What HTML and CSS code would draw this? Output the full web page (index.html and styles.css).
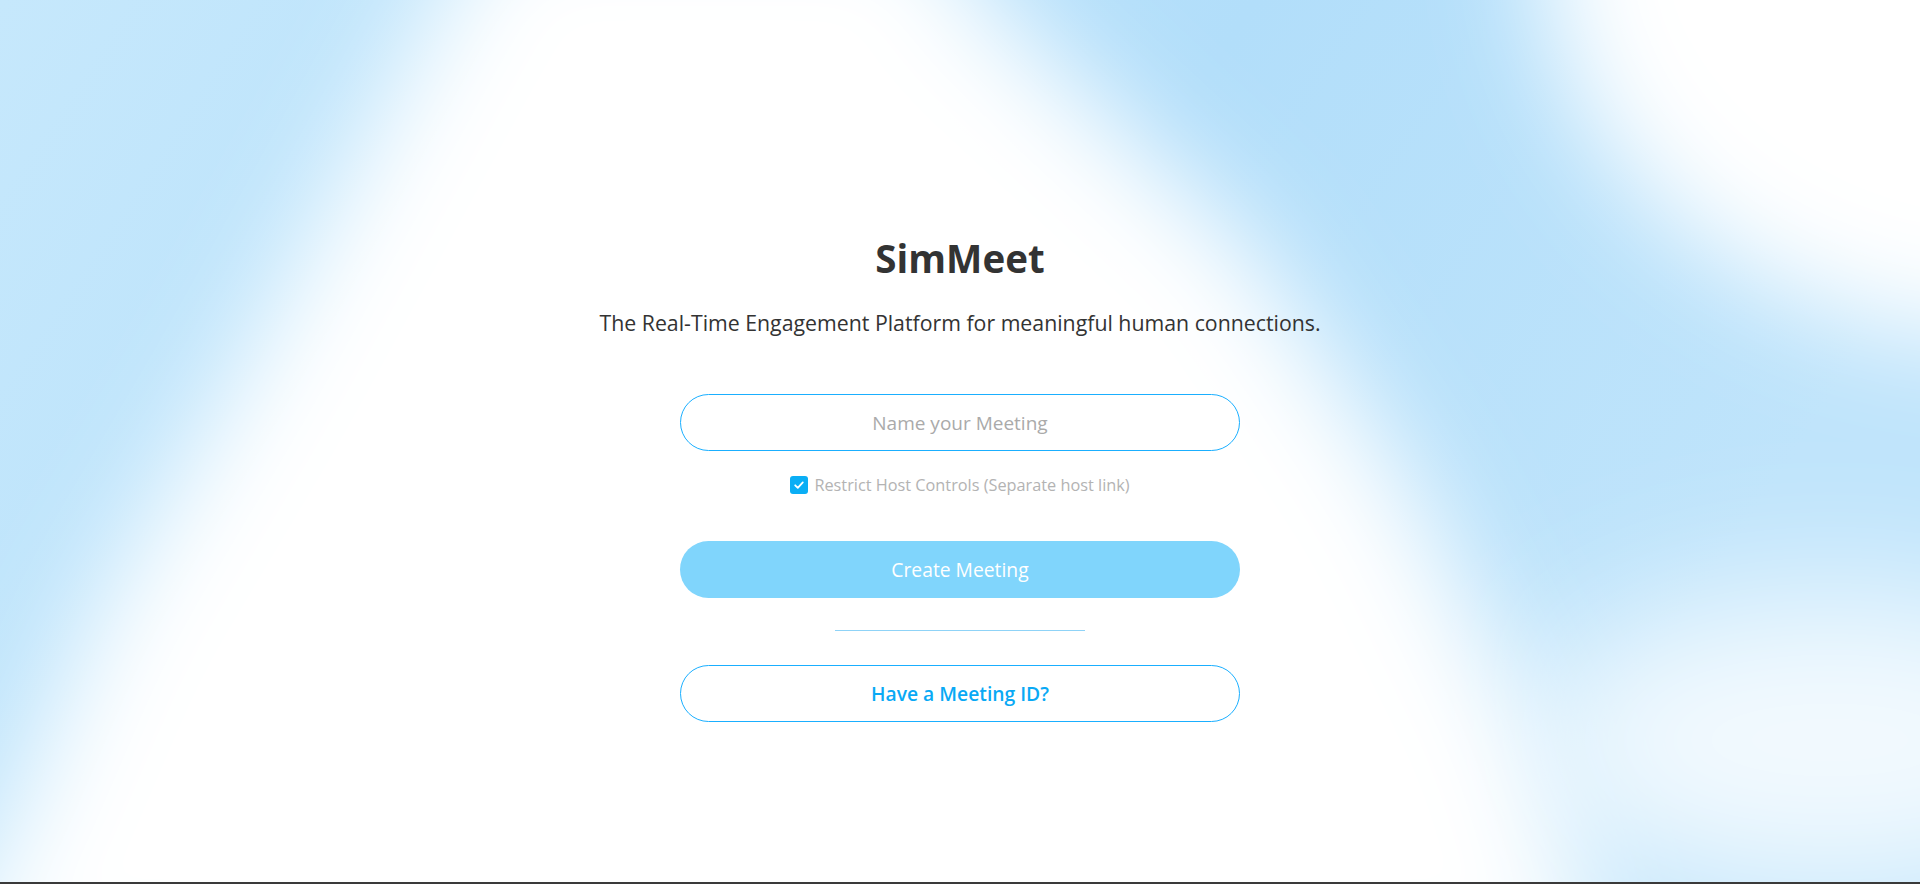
FILE: index.html
```html
<!DOCTYPE html>
<html lang="en">
<head>
<meta charset="utf-8">
<title>SimMeet</title>
<link rel="stylesheet" href="styles.css">
</head>
<body>
<main class="page">
  <section class="hero">
    <h1 class="title">SimMeet</h1>
    <p class="subtitle">The Real-Time Engagement Platform for meaningful human connections.</p>
    <form class="form">
      <input class="name-input" type="text" placeholder="Name your Meeting">
      <label class="check-row">
        <span class="check-box">
          <svg width="12" height="12" viewBox="0 0 12 12"><path d="M2.2 6.3 L4.8 8.8 L9.8 3.4" fill="none" stroke="#fff" stroke-width="1.8" stroke-linecap="round" stroke-linejoin="round"/></svg>
        </span>
        <span class="check-label">Restrict Host Controls (Separate host link)</span>
      </label>
      <button type="button" class="btn-create">Create Meeting</button>
      <hr class="divider">
      <button type="button" class="btn-join">Have a Meeting ID?</button>
    </form>
  </section>
</main>
<footer class="bottom-bar"></footer>
</body>
</html>
```
FILE: styles.css
```css
html, body {
  margin: 0;
  padding: 0;
}
body {
  min-height: 884px;
  display: flex;
  flex-direction: column;
  font-family: "Open Sans", "Noto Sans", sans-serif;
  color: #333;
  background-color: #fff;
  background-image: url("data:image/svg+xml,%3Csvg xmlns='http://www.w3.org/2000/svg' width='1920' height='884' viewBox='0 0 1920 884'%3E%3Cdefs%3E%3ClinearGradient id='g' x1='0' y1='0' x2='1' y2='0.3'%3E%3Cstop offset='0' stop-color='%23c6e8fc'/%3E%3Cstop offset='0.6' stop-color='%23b2defa'/%3E%3Cstop offset='1' stop-color='%23bfe4fb'/%3E%3C/linearGradient%3E%3Cfilter id='b' x='-50%25' y='-50%25' width='200%25' height='200%25'%3E%3CfeGaussianBlur stdDeviation='55'/%3E%3C/filter%3E%3Cfilter id='c' x='-50%25' y='-50%25' width='200%25' height='200%25'%3E%3CfeGaussianBlur stdDeviation='70'/%3E%3C/filter%3E%3C/defs%3E%3Crect width='1920' height='884' fill='url(%23g)'/%3E%3Cg filter='url(%23b)'%3E%3Cpath d='M 500,-100 L 920,-100 L 985,0 L 1250,245 L 1415,490 L 1535,735 L 1610,1000 L -90,1000 L -10,857 L 95,612 L 240,367 L 440,0 Z' fill='%23fff'/%3E%3Cellipse cx='2010' cy='-60' rx='470' ry='400' fill='%23fff'/%3E%3C/g%3E%3Cellipse cx='1830' cy='740' rx='300' ry='150' fill='%23fff' fill-opacity='0.8' filter='url(%23c)'/%3E%3C/svg%3E");
  background-repeat: no-repeat;
  background-size: 1920px 884px;
}
.page {
  flex: 1;
  display: flex;
  justify-content: center;
}
.hero {
  padding-top: 234px;
  display: flex;
  flex-direction: column;
  align-items: center;
}
.title {
  margin: 0;
  font-size: 38.5px;
  line-height: 48px;
  font-weight: 700;
  color: #333;
}
.subtitle {
  margin: 27px 0 0;
  font-size: 21.3px;
  line-height: 28px;
  color: #333;
}
.form {
  margin-top: 57px;
  width: 560px;
  display: flex;
  flex-direction: column;
  align-items: center;
}
.name-input {
  box-sizing: border-box;
  width: 560px;
  height: 57px;
  border: 1px solid #1aafff;
  border-radius: 29px;
  background: #fff;
  text-align: center;
  font-family: inherit;
  font-size: 19px;
  color: #333;
  outline: none;
}
.name-input::placeholder {
  color: #aaa;
}
.check-row {
  margin-top: 22px;
  height: 24px;
  display: flex;
  align-items: center;
  gap: 6px;
}
.check-box {
  width: 18px;
  height: 18px;
  border-radius: 3px;
  background: #0aaef5;
  display: flex;
  align-items: center;
  justify-content: center;
}
.check-label {
  font-size: 16.3px;
  color: #b3b3b3;
}
.btn-create {
  margin-top: 44px;
  width: 560px;
  height: 57px;
  border: none;
  border-radius: 29px;
  background: #80d5fc;
  color: #fff;
  font-family: inherit;
  font-size: 19.3px;
}
.divider {
  margin: 32px 0 0;
  width: 250px;
  height: 1px;
  border: none;
  background: #8fd3f7;
}
.btn-join {
  margin-top: 34px;
  box-sizing: border-box;
  width: 560px;
  height: 57px;
  border: 1px solid #1aafff;
  border-radius: 29px;
  background: #fff;
  color: #09a9f5;
  font-family: inherit;
  font-size: 19.3px;
  font-weight: 600;
}
.bottom-bar {
  height: 2px;
  background: #3a3a3a;
}
```
